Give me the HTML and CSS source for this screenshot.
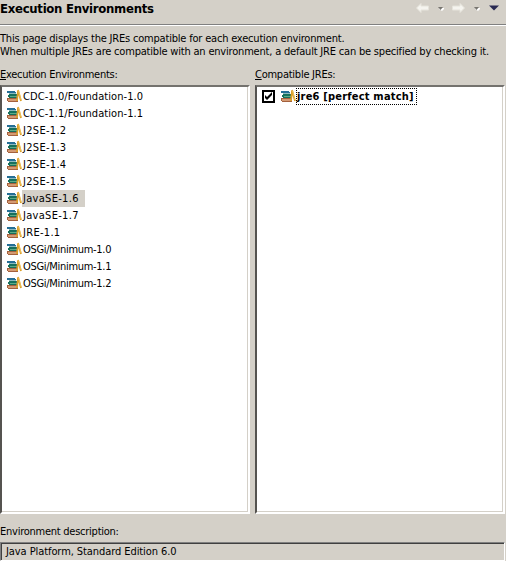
FILE: index.html
```html
<!DOCTYPE html>
<html lang="en">
<head>
<meta charset="utf-8">
<title>Execution Environments</title>
<link rel="stylesheet" href="styles.css">
</head>
<body>
<svg class="defs" aria-hidden="true">
  <symbol id="books" viewBox="0 0 16 14">
    <path fill="#246f96" d="M1 2h8v1h1v2H3V4H1z"/>
    <path fill="#8cb9be" d="M3 4h7v1H3z"/>
    <path fill="#16705c" d="M3 5h8v1h1v3H3V8H2V6h1z"/>
    <path fill="#5dab86" d="M4 7h7v1H4z"/>
    <path fill="#a4613d" d="M1 9h11v4H2v-1H1z"/>
    <path fill="#d49a73" d="M2 10h9v2H2z"/>
    <path fill="none" stroke="#dc9f28" stroke-width="1.800" d="M12 1l3 11M12 2l-1 10"/>
    <path fill="none" stroke="#f3ce70" stroke-width=".7" d="M12.500 1.500l2.500 9.500"/>
  </symbol>
</svg>
<header class="header">
  <h1 class="title">Execution Environments</h1>
  <nav class="nav">
    <svg class="arrow" viewBox="0 0 13 10"><path d="M.5 5 5 .5V3h7.500v4H5v2.500z"/></svg>
    <svg class="caret" viewBox="0 0 6 4"><path class="lit" d="M1 1h5v1L4 4 1 2z"/><path d="M0 0h5L2.500 3z"/></svg>
    <svg class="arrow next" viewBox="0 0 13 10"><path d="M12.500 5 8 .5V3H.5v4H8v2.500z"/></svg>
    <svg class="caret" viewBox="0 0 6 4"><path class="lit" d="M1 1h5v1L4 4 1 2z"/><path d="M0 0h5L2.500 3z"/></svg>
    <svg class="menu" viewBox="0 0 10 6"><path d="M0 .5h10L5 5.500z"/></svg>
  </nav>
</header>
<main class="page">
  <p class="intro">This page displays the JREs compatible for each execution environment.<br>When multiple JREs are compatible with an environment, a default JRE can be specified by checking it.</p>
  <div class="columns">
    <section class="column">
      <h2 class="label"><u>E</u>xecution Environments:</h2>
      <ul class="list">
        <li class="row"><svg class="books"><use href="#books"/></svg><span class="name cdc">CDC-1.0/Foundation-1.0</span></li>
        <li class="row"><svg class="books"><use href="#books"/></svg><span class="name cdc">CDC-1.1/Foundation-1.1</span></li>
        <li class="row"><svg class="books"><use href="#books"/></svg><span class="name">J2SE-1.2</span></li>
        <li class="row"><svg class="books"><use href="#books"/></svg><span class="name">J2SE-1.3</span></li>
        <li class="row"><svg class="books"><use href="#books"/></svg><span class="name">J2SE-1.4</span></li>
        <li class="row"><svg class="books"><use href="#books"/></svg><span class="name">J2SE-1.5</span></li>
        <li class="row"><svg class="books"><use href="#books"/></svg><span class="name selected">JavaSE-1.6</span></li>
        <li class="row"><svg class="books"><use href="#books"/></svg><span class="name">JavaSE-1.7</span></li>
        <li class="row"><svg class="books"><use href="#books"/></svg><span class="name">JRE-1.1</span></li>
        <li class="row"><svg class="books"><use href="#books"/></svg><span class="name osgi">OSGi/Minimum-1.0</span></li>
        <li class="row"><svg class="books"><use href="#books"/></svg><span class="name osgi">OSGi/Minimum-1.1</span></li>
        <li class="row"><svg class="books"><use href="#books"/></svg><span class="name osgi">OSGi/Minimum-1.2</span></li>
      </ul>
    </section>
    <section class="column">
      <h2 class="label"><u>C</u>ompatible JREs:</h2>
      <ul class="list">
        <li class="row"><svg class="check" viewBox="0 0 13 13"><path class="box" d="M1 1h11v11H1z"/><path class="tick" d="M3 5v3l2 2 5-5V2L5 7z"/></svg><svg class="books"><use href="#books"/></svg><span class="name focused">jre6 [perfect match]</span></li>
      </ul>
    </section>
  </div>
  <h2 class="label desc-label">Environment description:</h2>
  <div class="field">Java Platform, Standard Edition 6.0</div>
</main>
</body>
</html>
```
FILE: styles.css
```css
* { box-sizing: border-box; }
html, body { height: 100%; overflow: hidden; }
body {
  margin: 0;
  background: #d4d0c8;
  color: #000;
  font: 11px/13px "DejaVu Sans Condensed", "DejaVu Sans", sans-serif;
  font-stretch: condensed;
  white-space: nowrap;
}
h1, h2, p, ul { margin: 0; padding: 0; }
.defs { position: absolute; width: 0; height: 0; }
.header {
  display: flex;
  justify-content: space-between;
  height: 26px;
  border-bottom: 1px solid #fff;
  box-shadow: inset 0 -1px #808080;
}
.title { font-size: 13px; line-height: 17px; font-weight: bold; letter-spacing: -0.28px; }
.nav { display: flex; align-items: center; height: 16px; padding-right: 7px; }
.arrow { width: 13px; height: 10px; margin-right: 9px; fill: #f5f4ef; stroke: #e5e3db; }
.next { margin-left: 8px; }
.caret { width: 6px; height: 4px; fill: #777570; margin-top: 1px; }
.caret .lit { fill: #fff; }
.menu { width: 10px; height: 6px; margin-left: 9px; fill: #292952; }
.page { padding-top: 6px; }
.intro { height: 36px; letter-spacing: -0.195px; }
.columns { display: grid; grid-template-columns: 250px 250px; gap: 5px; }
.label { font-size: 11px; font-weight: normal; line-height: 13px; height: 17px; letter-spacing: -0.25px; }
.label u { text-underline-offset: 1px; }
.list {
  height: 429px;
  padding: 1px 3px;
  list-style: none;
  background: #fff;
  border: 2px solid;
  border-color: #74726e #fff #fff #555350;
  box-shadow: inset -1px -1px #d4d0c8;
}
.row { display: flex; align-items: flex-start; height: 17px; }
.books { width: 16px; height: 14px; flex: none; margin: 1px 0 0 1px; }
.name { height: 17px; line-height: 17px; padding: 0 1px; letter-spacing: 0.3px; }
.cdc { letter-spacing: 0.07px; }
.osgi { letter-spacing: -0.3px; }
.selected { background: #d4d0c8; padding-right: 6px; }
.focused { border: 1px dotted #000; line-height: 15px; font-weight: bold; padding: 0 2px 0 0; letter-spacing: 0.2px; }
.check { width: 13px; height: 13px; margin: 2px 4px 0 2px; fill: #000; }
.check .box { fill: #fff; stroke: #000; stroke-width: 2; }
.desc-label { margin-top: 11px; }
.field {
  height: 19px;
  width: 505px;
  padding-left: 5px;
  line-height: 17px;
  letter-spacing: -0.08px;
  border: 1px solid;
  border-color: #808080 #fff #fff #808080;
  box-shadow: inset 1px 1px #404040;
}
```
